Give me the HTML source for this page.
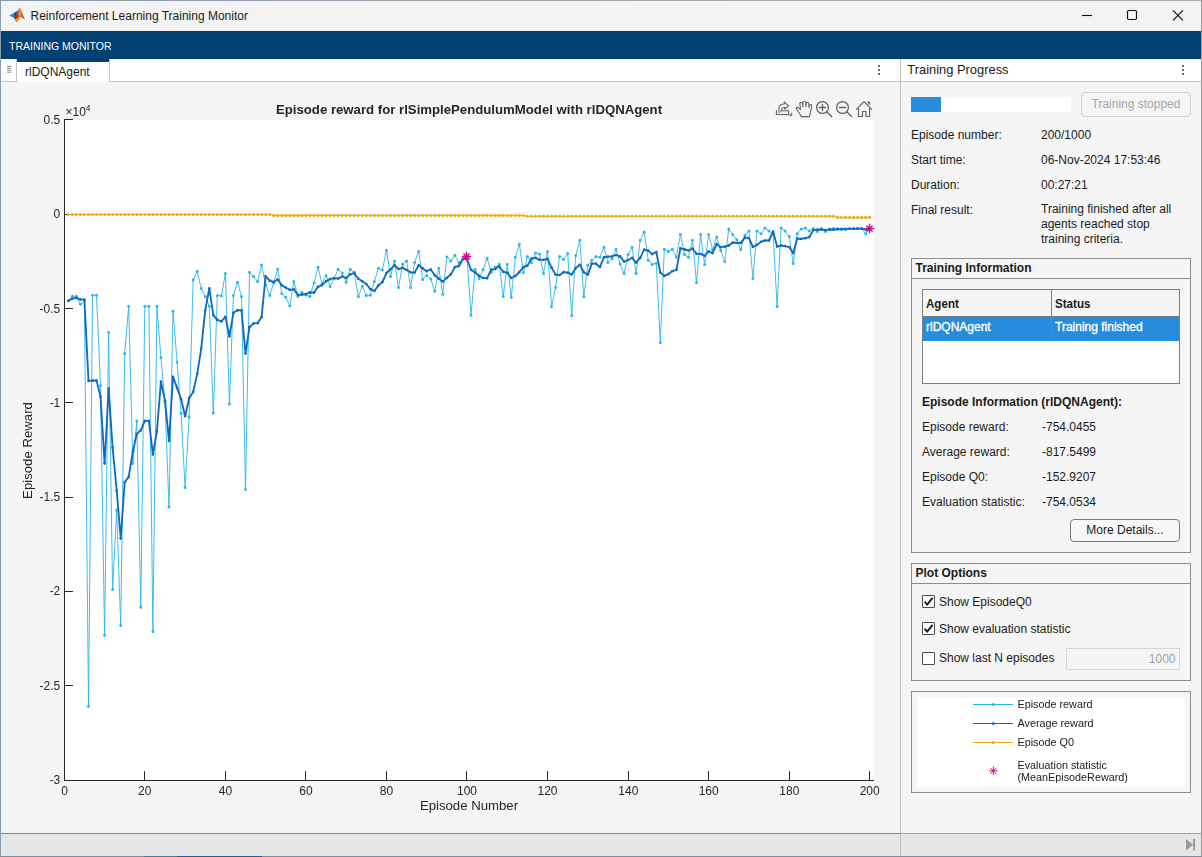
<!DOCTYPE html>
<html><head><meta charset="utf-8"><title>Reinforcement Learning Training Monitor</title>
<style>
html,body{margin:0;padding:0;}
body{width:1202px;height:857px;position:relative;overflow:hidden;background:#f5f5f5;font-family:"Liberation Sans",sans-serif;font-size:12px;color:#1a1a1a;}
.abs{position:absolute;}
#root{position:absolute;left:0;top:0;width:1202px;height:857px;}
.gs{will-change:transform;}
.t{position:absolute;white-space:nowrap;line-height:14px;}
.b{font-weight:bold;}
#titlebar{left:0;top:0;width:1202px;height:31px;background:#f3f3f3;}
#ribbon{left:0;top:31px;width:1202px;height:28px;background:#004073;}
#tabstrip{left:1px;top:59px;width:899px;height:22px;background:#fff;border-bottom:1px solid #c4c4c4;}
#rhead{left:901px;top:59px;width:300px;height:22px;background:#fff;border-bottom:1px solid #c4c4c4;}
#vdiv{left:900px;top:59px;width:1px;height:775px;background:#bdbdbd;}
#status{left:0;top:833px;width:1202px;height:23px;background:#e6e6e6;border-top:1px solid #a2a2a2;box-sizing:border-box;}
.panel{position:absolute;border:1px solid #8c8c8c;box-sizing:border-box;}
.ptitle{position:absolute;left:0;top:0;right:0;height:19px;border-bottom:1px solid #8c8c8c;}
.cb{position:absolute;width:13px;height:13px;box-sizing:border-box;border:1px solid #4a4a4a;background:#fff;border-radius:1px;}
</style></head><body><div id="root">

<!-- window chrome -->
<div class="abs" id="titlebar"></div>
<svg class="abs" style="left:8px;top:7px" width="18" height="17" viewBox="0 0 18 17">
  <defs>
    <linearGradient id="mlg" x1="6" y1="0" x2="17" y2="0" gradientUnits="userSpaceOnUse">
      <stop offset="0" stop-color="#7a1710"/><stop offset="0.3" stop-color="#b8321a"/><stop offset="0.5" stop-color="#f0902f"/><stop offset="0.62" stop-color="#ee8a2c"/><stop offset="0.72" stop-color="#cf471e"/><stop offset="1" stop-color="#a62a17"/>
    </linearGradient>
    <linearGradient id="mlb" x1="1" y1="0" x2="11" y2="0" gradientUnits="userSpaceOnUse">
      <stop offset="0" stop-color="#4a9be3"/><stop offset="0.5" stop-color="#2f7fd0"/><stop offset="0.62" stop-color="#17365f"/><stop offset="0.8" stop-color="#2f7fd0"/><stop offset="1" stop-color="#3a8ad6"/>
    </linearGradient>
  </defs>
  <path d="M1 8.5L6.2 5.8L9 4.1L11.2 1.5L9.6 7.5L6.2 11.1Z" fill="url(#mlb)"/>
  <path d="M6.2 11.1C8.2 9 10 4.5 11.3 1.3Q11.85 0.4 12.5 1.3C13.8 4.5 15 9.5 16.9 12.2C15.5 11.6 14 10.6 12.7 10.3C11.2 11.8 9.8 13.8 8.2 15C7.6 13.4 7 12.2 6.2 11.1Z" fill="url(#mlg)"/>
  <path d="M6.9 12.2L8.2 15C9.8 13.8 11 12.2 12.3 10.7L10.2 10.4Z" fill="#f6a21f" opacity="0.85"/>
</svg>
<div class="t" style="left:30.5px;top:9px;font-size:12px;color:#1b1b1b;">Reinforcement Learning Training Monitor</div>
<svg class="abs" style="left:1070px;top:0" width="132" height="31" viewBox="0 0 132 31">
  <path d="M12 15.5H22" stroke="#111" stroke-width="1.1"/>
  <rect x="57.5" y="10.5" width="9" height="9" rx="1.2" fill="none" stroke="#111" stroke-width="1.15"/>
  <path d="M103 10.3L113 20.3M113 10.3L103 20.3" stroke="#111" stroke-width="1.15"/>
</svg>
<div class="abs" id="ribbon"></div>
<div class="t" style="left:9px;top:38.5px;font-size:10.5px;color:#fff;">TRAINING MONITOR</div>

<!-- tab strip -->
<div class="abs" id="tabstrip"></div>
<div class="abs" style="left:16px;top:59px;width:1px;height:22px;background:#c4c4c4"></div>
<div class="abs" style="left:17px;top:59px;width:92px;height:23px;background:#fff;"></div>
<div class="abs" style="left:17px;top:59px;width:92px;height:3px;background:#004073;"></div>
<div class="abs" style="left:109px;top:59px;width:1px;height:22px;background:#c4c4c4"></div>
<svg class="abs" style="left:6px;top:65px" width="7" height="9" viewBox="0 0 7 9"><path d="M1 1.5H5.3M1 3.4H5.3M1 5.3H5.3M1 7.2H5.3" stroke="#8a8a8a" stroke-width="1"/></svg>
<div class="t" style="left:25px;top:64.5px;font-size:12px;color:#1a1a1a;">rlDQNAgent</div>
<svg class="abs" style="left:878px;top:65px" width="2" height="10" viewBox="0 0 2 10"><rect x="0" y="0" width="2" height="2" fill="#686868"/><rect x="0" y="4" width="2" height="2" fill="#686868"/><rect x="0" y="8" width="2" height="2" fill="#686868"/></svg>

<!-- right header -->
<div class="abs" id="rhead"></div>
<div class="t" style="left:907.3px;top:63px;font-size:12.9px;color:#1a1a1a;">Training Progress</div>
<svg class="abs" style="left:1182px;top:65px" width="2" height="10" viewBox="0 0 2 10"><rect x="0" y="0" width="2" height="2" fill="#686868"/><rect x="0" y="4" width="2" height="2" fill="#686868"/><rect x="0" y="8" width="2" height="2" fill="#686868"/></svg>
<div class="abs" id="vdiv"></div>

<!-- plot -->
<svg class="abs gs" style="left:0;top:82px" width="900" height="751" viewBox="0 82 900 751" font-family="Liberation Sans, sans-serif">
  <rect x="65" y="120" width="809" height="661" fill="#fff"/>
  <g stroke="#262626" stroke-width="1" fill="none">
    <path d="M64.5 119V781M64 780.5H874"/>
    <path d="M64.5 119.5H73M64.5 214.5H73M64.5 308.5H73M64.5 402.5H73M64.5 497.5H73M64.5 591.5H73M64.5 685.5H73"/>
    <path d="M144.5 780V771.2M225.5 780V771.2M305.5 780V771.2M386.5 780V771.2M466.5 780V771.2M547.5 780V771.2M628.5 780V771.2M708.5 780V771.2M789.5 780V771.2M869.5 780V771.2"/>
  </g>
  <g font-size="12" fill="#262626" text-anchor="end">
    <text x="60.3" y="123.8">0.5</text>
    <text x="60.3" y="217.8">0</text>
    <text x="60.3" y="312.8">-0.5</text>
    <text x="60.3" y="407">-1</text>
    <text x="60.3" y="500.8">-1.5</text>
    <text x="60.3" y="594.8">-2</text>
    <text x="60.3" y="689.8">-2.5</text>
    <text x="60.3" y="784">-3</text>
  </g>
  <g font-size="12" fill="#262626" text-anchor="middle">
    <text x="64.5" y="795">0</text>
    <text x="144.8" y="795">20</text>
    <text x="225.5" y="795">40</text>
    <text x="306" y="795">60</text>
    <text x="386.5" y="795">80</text>
    <text x="467" y="795">100</text>
    <text x="547.5" y="795">120</text>
    <text x="628.3" y="795">140</text>
    <text x="708.7" y="795">160</text>
    <text x="789.3" y="795">180</text>
    <text x="869.7" y="795">200</text>
  </g>
  <text x="65.5" y="116" font-size="12" fill="#262626">×10<tspan font-size="8.5" dy="-5">4</tspan></text>
  <text x="469" y="113.5" font-size="13.2" font-weight="bold" fill="#262626" text-anchor="middle">Episode reward for rlSimplePendulumModel with rlDQNAgent</text>
  <text x="469" y="810" font-size="13.2" fill="#262626" text-anchor="middle">Episode Number</text>
  <text transform="translate(32.3,450.5) rotate(-90)" font-size="13.2" fill="#262626" text-anchor="middle">Episode Reward</text>
  <polyline points="68.3,300.8 72.4,296.3 76.4,296.3 80.4,304.3 84.4,300.8 88.5,706.3 92.5,295.2 96.5,295.2 100.5,385.5 104.6,635.3 108.6,332.5 112.6,589.4 116.7,510.0 120.7,625.5 124.7,353.5 128.7,306.3 132.8,463.4 136.8,421.0 140.8,607.3 144.8,306.3 148.9,306.3 152.9,631.4 156.9,306.3 160.9,357.5 165.0,402.0 169.0,507.0 173.0,311.2 177.1,362.0 181.1,413.5 185.1,487.4 189.1,417.0 193.2,279.7 197.2,271.3 201.2,288.4 205.2,296.4 209.3,306.3 213.3,413.0 217.3,295.4 221.4,295.8 225.4,273.5 229.4,404.0 233.4,295.4 237.5,282.2 241.5,296.4 245.5,489.5 249.5,272.3 253.6,276.6 257.6,281.4 261.6,265.0 265.6,285.0 269.7,295.4 273.7,283.0 277.7,269.3 281.8,293.5 285.8,297.3 289.8,305.7 293.8,281.4 297.9,296.6 301.9,292.3 305.9,295.0 309.9,296.6 314.0,283.0 318.0,267.3 322.0,283.7 326.1,275.4 330.1,286.4 334.1,278.4 338.1,269.3 342.2,273.0 346.2,282.2 350.2,269.3 354.2,272.3 358.3,296.6 362.3,286.3 366.3,295.4 370.4,295.2 374.4,281.4 378.4,268.3 382.4,270.0 386.5,250.3 390.5,276.4 394.5,261.0 398.5,287.5 402.6,264.3 406.6,261.0 410.6,287.5 414.6,262.5 418.7,251.4 422.7,279.4 426.7,275.4 430.8,279.0 434.8,291.3 438.8,268.2 442.8,294.3 446.9,256.9 450.9,261.0 454.9,255.2 458.9,262.5 463.0,259.0 467.0,257.2 471.0,315.2 475.1,269.3 479.1,278.4 483.1,269.7 487.1,258.2 491.2,272.3 495.2,267.0 499.2,264.3 503.2,296.6 507.3,264.3 511.3,297.6 515.3,257.2 519.4,244.3 523.4,272.6 527.4,256.4 531.4,262.5 535.5,253.0 539.5,254.1 543.5,273.5 547.5,251.4 551.6,306.4 555.6,287.5 559.6,256.4 563.6,259.4 567.7,253.4 571.7,315.5 575.7,255.6 579.8,240.2 583.8,296.6 587.8,265.2 591.8,260.2 595.9,256.4 599.9,257.2 603.9,247.3 607.9,262.5 612.0,258.7 616.0,249.3 620.0,264.0 624.1,273.4 628.1,254.6 632.1,247.6 636.1,273.4 640.2,240.2 644.2,232.1 648.2,260.2 652.2,264.4 656.3,263.2 660.3,342.4 664.3,249.3 668.4,251.4 672.4,249.3 676.4,257.2 680.4,234.4 684.5,254.6 688.5,257.2 692.5,240.2 696.5,282.5 700.6,234.6 704.6,264.5 708.6,234.5 712.6,249.6 716.7,237.0 720.7,250.4 724.7,261.4 728.8,229.1 732.8,234.5 736.8,239.8 740.8,249.6 744.9,234.9 748.9,231.1 752.9,278.4 756.9,231.1 761.0,233.7 765.0,228.1 769.0,231.1 773.1,233.7 777.1,306.4 781.1,228.1 785.1,231.1 789.2,236.4 793.2,263.6 797.2,233.7 801.2,229.1 805.3,228.1 809.3,231.1 813.3,228.4 817.3,231.4 821.4,228.4 825.4,231.4 829.4,229.1 833.5,228.4 837.5,228.8 841.5,228.8 845.5,229.4 849.6,228.4 853.6,228.4 857.6,228.4 861.6,228.6 865.7,233.7 869.7,228.3" fill="none" stroke="#29B6EC" stroke-width="0.9" stroke-linejoin="round"/>
<path d="M68.3 300.8h0M72.4 296.3h0M76.4 296.3h0M80.4 304.3h0M84.4 300.8h0M88.5 706.3h0M92.5 295.2h0M96.5 295.2h0M100.5 385.5h0M104.6 635.3h0M108.6 332.5h0M112.6 589.4h0M116.7 510.0h0M120.7 625.5h0M124.7 353.5h0M128.7 306.3h0M132.8 463.4h0M136.8 421.0h0M140.8 607.3h0M144.8 306.3h0M148.9 306.3h0M152.9 631.4h0M156.9 306.3h0M160.9 357.5h0M165.0 402.0h0M169.0 507.0h0M173.0 311.2h0M177.1 362.0h0M181.1 413.5h0M185.1 487.4h0M189.1 417.0h0M193.2 279.7h0M197.2 271.3h0M201.2 288.4h0M205.2 296.4h0M209.3 306.3h0M213.3 413.0h0M217.3 295.4h0M221.4 295.8h0M225.4 273.5h0M229.4 404.0h0M233.4 295.4h0M237.5 282.2h0M241.5 296.4h0M245.5 489.5h0M249.5 272.3h0M253.6 276.6h0M257.6 281.4h0M261.6 265.0h0M265.6 285.0h0M269.7 295.4h0M273.7 283.0h0M277.7 269.3h0M281.8 293.5h0M285.8 297.3h0M289.8 305.7h0M293.8 281.4h0M297.9 296.6h0M301.9 292.3h0M305.9 295.0h0M309.9 296.6h0M314.0 283.0h0M318.0 267.3h0M322.0 283.7h0M326.1 275.4h0M330.1 286.4h0M334.1 278.4h0M338.1 269.3h0M342.2 273.0h0M346.2 282.2h0M350.2 269.3h0M354.2 272.3h0M358.3 296.6h0M362.3 286.3h0M366.3 295.4h0M370.4 295.2h0M374.4 281.4h0M378.4 268.3h0M382.4 270.0h0M386.5 250.3h0M390.5 276.4h0M394.5 261.0h0M398.5 287.5h0M402.6 264.3h0M406.6 261.0h0M410.6 287.5h0M414.6 262.5h0M418.7 251.4h0M422.7 279.4h0M426.7 275.4h0M430.8 279.0h0M434.8 291.3h0M438.8 268.2h0M442.8 294.3h0M446.9 256.9h0M450.9 261.0h0M454.9 255.2h0M458.9 262.5h0M463.0 259.0h0M467.0 257.2h0M471.0 315.2h0M475.1 269.3h0M479.1 278.4h0M483.1 269.7h0M487.1 258.2h0M491.2 272.3h0M495.2 267.0h0M499.2 264.3h0M503.2 296.6h0M507.3 264.3h0M511.3 297.6h0M515.3 257.2h0M519.4 244.3h0M523.4 272.6h0M527.4 256.4h0M531.4 262.5h0M535.5 253.0h0M539.5 254.1h0M543.5 273.5h0M547.5 251.4h0M551.6 306.4h0M555.6 287.5h0M559.6 256.4h0M563.6 259.4h0M567.7 253.4h0M571.7 315.5h0M575.7 255.6h0M579.8 240.2h0M583.8 296.6h0M587.8 265.2h0M591.8 260.2h0M595.9 256.4h0M599.9 257.2h0M603.9 247.3h0M607.9 262.5h0M612.0 258.7h0M616.0 249.3h0M620.0 264.0h0M624.1 273.4h0M628.1 254.6h0M632.1 247.6h0M636.1 273.4h0M640.2 240.2h0M644.2 232.1h0M648.2 260.2h0M652.2 264.4h0M656.3 263.2h0M660.3 342.4h0M664.3 249.3h0M668.4 251.4h0M672.4 249.3h0M676.4 257.2h0M680.4 234.4h0M684.5 254.6h0M688.5 257.2h0M692.5 240.2h0M696.5 282.5h0M700.6 234.6h0M704.6 264.5h0M708.6 234.5h0M712.6 249.6h0M716.7 237.0h0M720.7 250.4h0M724.7 261.4h0M728.8 229.1h0M732.8 234.5h0M736.8 239.8h0M740.8 249.6h0M744.9 234.9h0M748.9 231.1h0M752.9 278.4h0M756.9 231.1h0M761.0 233.7h0M765.0 228.1h0M769.0 231.1h0M773.1 233.7h0M777.1 306.4h0M781.1 228.1h0M785.1 231.1h0M789.2 236.4h0M793.2 263.6h0M797.2 233.7h0M801.2 229.1h0M805.3 228.1h0M809.3 231.1h0M813.3 228.4h0M817.3 231.4h0M821.4 228.4h0M825.4 231.4h0M829.4 229.1h0M833.5 228.4h0M837.5 228.8h0M841.5 228.8h0M845.5 229.4h0M849.6 228.4h0M853.6 228.4h0M857.6 228.4h0M861.6 228.6h0M865.7 233.7h0M869.7 228.3h0" stroke="#29B6EC" stroke-width="3.0" stroke-linecap="round" fill="none"/>
<polyline points="68.3,214.5 72.4,214.5 76.4,214.5 80.4,214.5 84.4,214.5 88.5,214.5 92.5,214.5 96.5,214.5 100.5,214.5 104.6,214.5 108.6,214.5 112.6,214.5 116.7,214.5 120.7,214.5 124.7,214.5 128.7,214.5 132.8,214.5 136.8,214.5 140.8,214.5 144.8,214.5 148.9,214.5 152.9,214.5 156.9,214.5 160.9,214.5 165.0,214.5 169.0,214.5 173.0,214.5 177.1,214.5 181.1,214.5 185.1,214.5 189.1,214.5 193.2,214.5 197.2,214.5 201.2,214.5 205.2,214.5 209.3,214.5 213.3,214.5 217.3,214.5 221.4,214.5 225.4,214.5 229.4,214.5 233.4,214.5 237.5,214.5 241.5,214.5 245.5,214.5 249.5,214.5 253.6,214.5 257.6,214.5 261.6,214.5 265.6,214.5 269.7,214.5 273.7,215.4 277.7,215.4 281.8,215.4 285.8,215.4 289.8,215.4 293.8,215.4 297.9,215.4 301.9,215.4 305.9,215.4 309.9,215.4 314.0,215.4 318.0,215.4 322.0,215.4 326.1,215.4 330.1,215.4 334.1,215.4 338.1,215.4 342.2,215.4 346.2,215.4 350.2,215.4 354.2,215.4 358.3,215.4 362.3,215.4 366.3,215.4 370.4,215.4 374.4,215.4 378.4,215.4 382.4,215.4 386.5,215.4 390.5,215.4 394.5,215.4 398.5,215.4 402.6,215.4 406.6,215.4 410.6,215.4 414.6,215.4 418.7,215.4 422.7,215.4 426.7,215.4 430.8,215.4 434.8,215.4 438.8,215.4 442.8,215.4 446.9,215.4 450.9,215.4 454.9,215.4 458.9,215.4 463.0,215.4 467.0,215.4 471.0,215.4 475.1,215.4 479.1,215.4 483.1,215.4 487.1,215.4 491.2,215.4 495.2,215.4 499.2,215.4 503.2,215.4 507.3,215.4 511.3,215.4 515.3,215.4 519.4,215.4 523.4,215.4 527.4,216.3 531.4,216.3 535.5,216.3 539.5,216.3 543.5,216.3 547.5,216.3 551.6,216.3 555.6,216.3 559.6,216.3 563.6,216.3 567.7,216.3 571.7,216.3 575.7,216.3 579.8,216.3 583.8,216.3 587.8,216.3 591.8,216.3 595.9,216.3 599.9,216.3 603.9,216.3 607.9,216.3 612.0,216.3 616.0,216.3 620.0,216.3 624.1,216.3 628.1,216.3 632.1,216.3 636.1,216.3 640.2,216.3 644.2,216.3 648.2,216.3 652.2,216.3 656.3,216.3 660.3,216.3 664.3,216.3 668.4,216.3 672.4,216.3 676.4,216.3 680.4,216.3 684.5,216.3 688.5,216.3 692.5,216.3 696.5,216.3 700.6,216.3 704.6,216.3 708.6,216.3 712.6,216.3 716.7,216.3 720.7,216.3 724.7,216.3 728.8,216.3 732.8,216.3 736.8,216.3 740.8,216.3 744.9,216.3 748.9,216.3 752.9,216.3 756.9,216.3 761.0,216.3 765.0,216.3 769.0,216.3 773.1,216.3 777.1,216.3 781.1,216.3 785.1,216.3 789.2,216.3 793.2,216.3 797.2,216.3 801.2,216.3 805.3,216.3 809.3,216.3 813.3,216.3 817.3,216.3 821.4,216.3 825.4,216.3 829.4,216.3 833.5,216.3 837.5,217.4 841.5,217.4 845.5,217.4 849.6,217.4 853.6,217.4 857.6,217.4 861.6,217.4 865.7,217.4 869.7,217.4" fill="none" stroke="#ECAA14" stroke-width="1"/>
<path d="M68.3 214.5h0M72.4 214.5h0M76.4 214.5h0M80.4 214.5h0M84.4 214.5h0M88.5 214.5h0M92.5 214.5h0M96.5 214.5h0M100.5 214.5h0M104.6 214.5h0M108.6 214.5h0M112.6 214.5h0M116.7 214.5h0M120.7 214.5h0M124.7 214.5h0M128.7 214.5h0M132.8 214.5h0M136.8 214.5h0M140.8 214.5h0M144.8 214.5h0M148.9 214.5h0M152.9 214.5h0M156.9 214.5h0M160.9 214.5h0M165.0 214.5h0M169.0 214.5h0M173.0 214.5h0M177.1 214.5h0M181.1 214.5h0M185.1 214.5h0M189.1 214.5h0M193.2 214.5h0M197.2 214.5h0M201.2 214.5h0M205.2 214.5h0M209.3 214.5h0M213.3 214.5h0M217.3 214.5h0M221.4 214.5h0M225.4 214.5h0M229.4 214.5h0M233.4 214.5h0M237.5 214.5h0M241.5 214.5h0M245.5 214.5h0M249.5 214.5h0M253.6 214.5h0M257.6 214.5h0M261.6 214.5h0M265.6 214.5h0M269.7 214.5h0M273.7 215.4h0M277.7 215.4h0M281.8 215.4h0M285.8 215.4h0M289.8 215.4h0M293.8 215.4h0M297.9 215.4h0M301.9 215.4h0M305.9 215.4h0M309.9 215.4h0M314.0 215.4h0M318.0 215.4h0M322.0 215.4h0M326.1 215.4h0M330.1 215.4h0M334.1 215.4h0M338.1 215.4h0M342.2 215.4h0M346.2 215.4h0M350.2 215.4h0M354.2 215.4h0M358.3 215.4h0M362.3 215.4h0M366.3 215.4h0M370.4 215.4h0M374.4 215.4h0M378.4 215.4h0M382.4 215.4h0M386.5 215.4h0M390.5 215.4h0M394.5 215.4h0M398.5 215.4h0M402.6 215.4h0M406.6 215.4h0M410.6 215.4h0M414.6 215.4h0M418.7 215.4h0M422.7 215.4h0M426.7 215.4h0M430.8 215.4h0M434.8 215.4h0M438.8 215.4h0M442.8 215.4h0M446.9 215.4h0M450.9 215.4h0M454.9 215.4h0M458.9 215.4h0M463.0 215.4h0M467.0 215.4h0M471.0 215.4h0M475.1 215.4h0M479.1 215.4h0M483.1 215.4h0M487.1 215.4h0M491.2 215.4h0M495.2 215.4h0M499.2 215.4h0M503.2 215.4h0M507.3 215.4h0M511.3 215.4h0M515.3 215.4h0M519.4 215.4h0M523.4 215.4h0M527.4 216.3h0M531.4 216.3h0M535.5 216.3h0M539.5 216.3h0M543.5 216.3h0M547.5 216.3h0M551.6 216.3h0M555.6 216.3h0M559.6 216.3h0M563.6 216.3h0M567.7 216.3h0M571.7 216.3h0M575.7 216.3h0M579.8 216.3h0M583.8 216.3h0M587.8 216.3h0M591.8 216.3h0M595.9 216.3h0M599.9 216.3h0M603.9 216.3h0M607.9 216.3h0M612.0 216.3h0M616.0 216.3h0M620.0 216.3h0M624.1 216.3h0M628.1 216.3h0M632.1 216.3h0M636.1 216.3h0M640.2 216.3h0M644.2 216.3h0M648.2 216.3h0M652.2 216.3h0M656.3 216.3h0M660.3 216.3h0M664.3 216.3h0M668.4 216.3h0M672.4 216.3h0M676.4 216.3h0M680.4 216.3h0M684.5 216.3h0M688.5 216.3h0M692.5 216.3h0M696.5 216.3h0M700.6 216.3h0M704.6 216.3h0M708.6 216.3h0M712.6 216.3h0M716.7 216.3h0M720.7 216.3h0M724.7 216.3h0M728.8 216.3h0M732.8 216.3h0M736.8 216.3h0M740.8 216.3h0M744.9 216.3h0M748.9 216.3h0M752.9 216.3h0M756.9 216.3h0M761.0 216.3h0M765.0 216.3h0M769.0 216.3h0M773.1 216.3h0M777.1 216.3h0M781.1 216.3h0M785.1 216.3h0M789.2 216.3h0M793.2 216.3h0M797.2 216.3h0M801.2 216.3h0M805.3 216.3h0M809.3 216.3h0M813.3 216.3h0M817.3 216.3h0M821.4 216.3h0M825.4 216.3h0M829.4 216.3h0M833.5 216.3h0M837.5 217.4h0M841.5 217.4h0M845.5 217.4h0M849.6 217.4h0M853.6 217.4h0M857.6 217.4h0M861.6 217.4h0M865.7 217.4h0M869.7 217.4h0" stroke="#ECAA14" stroke-width="3.1" stroke-linecap="round" fill="none"/>
<polyline points="68.3,300.8 72.4,298.6 76.4,297.8 80.4,299.4 84.4,299.7 88.5,380.8 92.5,380.6 96.5,380.4 100.5,396.6 104.6,463.5 108.6,388.7 112.6,447.6 116.7,490.5 120.7,538.5 124.7,482.2 128.7,476.9 132.8,451.7 136.8,433.9 140.8,430.3 144.8,420.9 148.9,420.9 152.9,454.5 156.9,431.5 160.9,381.6 165.0,400.7 169.0,440.8 173.0,376.8 177.1,387.9 181.1,399.1 185.1,416.2 189.1,398.2 193.2,391.9 197.2,373.8 201.2,348.8 205.2,310.6 209.3,288.4 213.3,315.1 217.3,319.9 221.4,321.4 225.4,316.8 229.4,336.3 233.4,312.8 237.5,310.2 241.5,310.3 245.5,353.5 249.5,327.2 253.6,323.4 257.6,323.2 261.6,317.0 265.6,276.1 269.7,280.7 273.7,282.0 277.7,279.5 281.8,285.2 285.8,287.7 289.8,289.8 293.8,289.4 297.9,294.9 301.9,294.7 305.9,294.2 309.9,292.4 314.0,292.7 318.0,286.8 322.0,285.1 326.1,281.2 330.1,279.2 334.1,278.2 338.1,278.6 342.2,276.5 346.2,277.9 350.2,274.4 354.2,273.2 358.3,278.7 362.3,281.3 366.3,284.0 370.4,289.2 374.4,291.0 378.4,285.3 382.4,282.1 386.5,273.0 390.5,269.3 394.5,265.2 398.5,269.0 402.6,267.9 406.6,270.0 410.6,272.3 414.6,272.6 418.7,265.3 422.7,268.4 426.7,271.2 430.8,269.5 434.8,275.3 438.8,278.7 442.8,281.6 446.9,277.9 450.9,274.3 454.9,267.1 458.9,266.0 463.0,258.9 467.0,259.0 471.0,269.8 475.1,272.6 479.1,275.8 483.1,278.0 487.1,278.2 491.2,269.6 495.2,269.1 499.2,266.3 503.2,271.7 507.3,272.9 511.3,278.0 515.3,276.0 519.4,272.0 523.4,267.2 527.4,265.6 531.4,258.6 535.5,257.8 539.5,259.7 543.5,259.9 547.5,258.9 551.6,267.7 555.6,274.6 559.6,275.0 563.6,272.2 567.7,272.6 571.7,274.4 575.7,268.1 579.8,264.8 583.8,272.3 587.8,274.6 591.8,263.6 595.9,263.7 599.9,267.1 603.9,257.3 607.9,256.7 612.0,256.4 616.0,255.0 620.0,256.4 624.1,261.6 628.1,260.0 632.1,257.8 636.1,262.6 640.2,257.8 644.2,249.6 648.2,250.7 652.2,254.1 656.3,252.0 660.3,272.5 664.3,275.9 668.4,274.1 672.4,271.1 676.4,269.9 680.4,248.3 684.5,249.4 688.5,250.5 692.5,248.7 696.5,253.8 700.6,253.8 704.6,255.8 708.6,251.3 712.6,253.1 716.7,244.0 720.7,247.2 724.7,246.6 728.8,245.5 732.8,242.5 736.8,243.0 740.8,242.9 744.9,237.6 748.9,238.0 752.9,246.8 756.9,245.0 761.0,241.8 765.0,240.5 769.0,240.5 773.1,231.5 777.1,246.6 781.1,245.5 785.1,246.1 789.2,247.1 793.2,253.1 797.2,238.6 801.2,238.8 805.3,238.2 809.3,237.1 813.3,230.1 817.3,229.6 821.4,229.5 825.4,230.1 829.4,229.7 833.5,229.7 837.5,229.2 841.5,229.3 845.5,228.9 849.6,228.8 853.6,228.8 857.6,228.7 861.6,228.6 865.7,229.5 869.7,229.5" fill="none" stroke="#0F6BC2" stroke-width="1.85" stroke-linejoin="round"/>
<path d="M68.3 300.8h0M72.4 298.6h0M76.4 297.8h0M80.4 299.4h0M84.4 299.7h0M88.5 380.8h0M92.5 380.6h0M96.5 380.4h0M100.5 396.6h0M104.6 463.5h0M108.6 388.7h0M112.6 447.6h0M116.7 490.5h0M120.7 538.5h0M124.7 482.2h0M128.7 476.9h0M132.8 451.7h0M136.8 433.9h0M140.8 430.3h0M144.8 420.9h0M148.9 420.9h0M152.9 454.5h0M156.9 431.5h0M160.9 381.6h0M165.0 400.7h0M169.0 440.8h0M173.0 376.8h0M177.1 387.9h0M181.1 399.1h0M185.1 416.2h0M189.1 398.2h0M193.2 391.9h0M197.2 373.8h0M201.2 348.8h0M205.2 310.6h0M209.3 288.4h0M213.3 315.1h0M217.3 319.9h0M221.4 321.4h0M225.4 316.8h0M229.4 336.3h0M233.4 312.8h0M237.5 310.2h0M241.5 310.3h0M245.5 353.5h0M249.5 327.2h0M253.6 323.4h0M257.6 323.2h0M261.6 317.0h0M265.6 276.1h0M269.7 280.7h0M273.7 282.0h0M277.7 279.5h0M281.8 285.2h0M285.8 287.7h0M289.8 289.8h0M293.8 289.4h0M297.9 294.9h0M301.9 294.7h0M305.9 294.2h0M309.9 292.4h0M314.0 292.7h0M318.0 286.8h0M322.0 285.1h0M326.1 281.2h0M330.1 279.2h0M334.1 278.2h0M338.1 278.6h0M342.2 276.5h0M346.2 277.9h0M350.2 274.4h0M354.2 273.2h0M358.3 278.7h0M362.3 281.3h0M366.3 284.0h0M370.4 289.2h0M374.4 291.0h0M378.4 285.3h0M382.4 282.1h0M386.5 273.0h0M390.5 269.3h0M394.5 265.2h0M398.5 269.0h0M402.6 267.9h0M406.6 270.0h0M410.6 272.3h0M414.6 272.6h0M418.7 265.3h0M422.7 268.4h0M426.7 271.2h0M430.8 269.5h0M434.8 275.3h0M438.8 278.7h0M442.8 281.6h0M446.9 277.9h0M450.9 274.3h0M454.9 267.1h0M458.9 266.0h0M463.0 258.9h0M467.0 259.0h0M471.0 269.8h0M475.1 272.6h0M479.1 275.8h0M483.1 278.0h0M487.1 278.2h0M491.2 269.6h0M495.2 269.1h0M499.2 266.3h0M503.2 271.7h0M507.3 272.9h0M511.3 278.0h0M515.3 276.0h0M519.4 272.0h0M523.4 267.2h0M527.4 265.6h0M531.4 258.6h0M535.5 257.8h0M539.5 259.7h0M543.5 259.9h0M547.5 258.9h0M551.6 267.7h0M555.6 274.6h0M559.6 275.0h0M563.6 272.2h0M567.7 272.6h0M571.7 274.4h0M575.7 268.1h0M579.8 264.8h0M583.8 272.3h0M587.8 274.6h0M591.8 263.6h0M595.9 263.7h0M599.9 267.1h0M603.9 257.3h0M607.9 256.7h0M612.0 256.4h0M616.0 255.0h0M620.0 256.4h0M624.1 261.6h0M628.1 260.0h0M632.1 257.8h0M636.1 262.6h0M640.2 257.8h0M644.2 249.6h0M648.2 250.7h0M652.2 254.1h0M656.3 252.0h0M660.3 272.5h0M664.3 275.9h0M668.4 274.1h0M672.4 271.1h0M676.4 269.9h0M680.4 248.3h0M684.5 249.4h0M688.5 250.5h0M692.5 248.7h0M696.5 253.8h0M700.6 253.8h0M704.6 255.8h0M708.6 251.3h0M712.6 253.1h0M716.7 244.0h0M720.7 247.2h0M724.7 246.6h0M728.8 245.5h0M732.8 242.5h0M736.8 243.0h0M740.8 242.9h0M744.9 237.6h0M748.9 238.0h0M752.9 246.8h0M756.9 245.0h0M761.0 241.8h0M765.0 240.5h0M769.0 240.5h0M773.1 231.5h0M777.1 246.6h0M781.1 245.5h0M785.1 246.1h0M789.2 247.1h0M793.2 253.1h0M797.2 238.6h0M801.2 238.8h0M805.3 238.2h0M809.3 237.1h0M813.3 230.1h0M817.3 229.6h0M821.4 229.5h0M825.4 230.1h0M829.4 229.7h0M833.5 229.7h0M837.5 229.2h0M841.5 229.3h0M845.5 228.9h0M849.6 228.8h0M853.6 228.8h0M857.6 228.7h0M861.6 228.6h0M865.7 229.5h0M869.7 229.5h0" stroke="#0F6BC2" stroke-width="2.7" stroke-linecap="round" fill="none"/>
<path d="M461.80 256.50L471.20 256.50M463.44 253.44L469.56 259.56M466.50 251.80L466.50 261.20M469.56 253.44L463.44 259.56" stroke="#CC0A8C" stroke-width="1.35" fill="none"/>
<path d="M864.80 228.50L874.20 228.50M866.44 225.44L872.56 231.56M869.50 223.80L869.50 233.20M872.56 225.44L866.44 231.56" stroke="#CC0A8C" stroke-width="1.35" fill="none"/>
  <!-- axes toolbar -->
  <g stroke="#626262" stroke-width="1.05" fill="none" stroke-linecap="round" stroke-linejoin="round">
    <path d="M776.4 110.6V114.4H788.6V110.8H781.6"/>
    <path d="M778.9 112.4V108.8C779 105.6 781.2 103.9 784.2 103.9V102L788.6 105.8L784.6 109V107.2C782.5 107.3 781.2 108.6 780.9 112"/>
    <path d="M789.2 115.7H791.8V112.9Z" fill="#626262" stroke-width="0.4"/>
    <path d="M801.6 116.6L798.2 111.5L796.4 108.6Q795.9 107.4 797 107.3Q798.2 107.3 800.6 109.5L799.8 103.6Q799.7 102.3 800.9 102.2Q802 102.1 802.3 103.4L802.9 107L802.9 102.6Q803 101.2 804.3 101.2Q805.6 101.2 805.7 102.6L806 107L806.3 103.4Q806.5 102.2 807.6 102.2Q808.8 102.3 808.8 103.6L808.9 107.2L809.6 105.4Q810 104.3 811 104.5Q811.9 104.8 811.7 106L809.5 116.6Z"/>
    <g stroke-width="1.3"><circle cx="822.5" cy="107.5" r="5.9"/><path d="M826.7 111.8L831.6 116.5M819.4 107.5H825.6M822.5 104.4V110.6"/>
    <circle cx="842.5" cy="107.5" r="5.9"/><path d="M846.7 111.8L851.6 116.5M839.4 107.5H845.6"/></g>
    <path d="M856.5 109.3L864 101.6L871.6 109.3M858.5 108.6V116.5H862.5V111.5H866V116.5H869.6V108.6" stroke-width="1.15"/>
    <path d="M867.4 102H870V104.6Z" fill="#626262" stroke-width="0.5"/>
  </g>
</svg>

<!-- right panel contents -->
<div class="abs" style="left:911px;top:97px;width:160px;height:15px;background:#fff;"></div>
<div class="abs" style="left:911px;top:97px;width:30px;height:15px;background:#268cdd;"></div>
<div class="abs" style="left:1081px;top:92px;width:110px;height:25px;box-sizing:border-box;border:1px solid #d2d2d2;border-radius:4px;background:#f5f5f5;"></div>
<div class="t" style="left:1081px;top:97px;width:110px;text-align:center;color:#a6a6a6;">Training stopped</div>

<div class="t" style="left:911px;top:128px;">Episode number:</div>
<div class="t" style="left:1041px;top:128px;">200/1000</div>
<div class="t" style="left:911px;top:153px;">Start time:</div>
<div class="t" style="left:1041px;top:153px;">06-Nov-2024 17:53:46</div>
<div class="t" style="left:911px;top:178px;">Duration:</div>
<div class="t" style="left:1041px;top:178px;">00:27:21</div>
<div class="t" style="left:911px;top:203px;">Final result:</div>
<div class="t" style="left:1041px;top:202px;line-height:14.8px;">Training finished after all<br>agents reached stop<br>training criteria.</div>

<!-- Training Information panel -->
<div class="panel" style="left:911px;top:258px;width:280px;height:295px;">
  <div class="ptitle"></div>
</div>
<div class="t b" style="left:915.5px;top:261px;">Training Information</div>
<div class="abs" style="left:922px;top:289px;width:258px;height:95px;box-sizing:border-box;border:1px solid #7d7d7d;background:#fff;"></div>
<div class="abs" style="left:923px;top:290px;width:256px;height:26px;background:#f5f5f5;border-bottom:1px solid #7d7d7d;"></div>
<div class="abs" style="left:923px;top:317px;width:256px;height:24px;background:#268cdd;"></div>
<div class="abs" style="left:1051px;top:290px;width:1px;height:51px;background:#7d7d7d;"></div>
<div class="t b" style="left:926px;top:297px;font-size:12.6px;transform:scaleX(0.92);transform-origin:0 0;">Agent</div>
<div class="t b" style="left:1055px;top:297px;font-size:12.6px;transform:scaleX(0.92);transform-origin:0 0;">Status</div>
<div class="t" style="left:926px;top:319.5px;color:#fff;font-size:12px;-webkit-text-stroke:0.35px #fff;">rlDQNAgent</div>
<div class="t" style="left:1055px;top:319.5px;color:#fff;font-size:12px;-webkit-text-stroke:0.35px #fff;">Training finished</div>
<div class="t b" style="left:922px;top:395px;">Episode Information (rlDQNAgent):</div>
<div class="t" style="left:922px;top:420px;">Episode reward:</div>
<div class="t" style="left:1042px;top:420px;">-754.0455</div>
<div class="t" style="left:922px;top:445px;">Average reward:</div>
<div class="t" style="left:1042px;top:445px;">-817.5499</div>
<div class="t" style="left:922px;top:470px;">Episode Q0:</div>
<div class="t" style="left:1042px;top:470px;">-152.9207</div>
<div class="t" style="left:922px;top:495px;">Evaluation statistic:</div>
<div class="t" style="left:1042px;top:495px;">-754.0534</div>
<div class="abs" style="left:1070px;top:519px;width:110px;height:23px;box-sizing:border-box;border:1px solid #7a7a7a;border-radius:4px;background:#f7f7f7;"></div>
<div class="t" style="left:1070px;top:523px;width:110px;text-align:center;">More Details...</div>

<!-- Plot Options panel -->
<div class="panel" style="left:911px;top:563px;width:280px;height:118px;">
  <div class="ptitle"></div>
</div>
<div class="t b" style="left:915.5px;top:566px;">Plot Options</div>
<div class="cb" style="left:922px;top:595px;"></div>
<svg class="abs" style="left:922px;top:595px" width="13" height="13" viewBox="0 0 13 13"><path d="M2.6 6.6L5.2 9.6L10.6 2.8" fill="none" stroke="#1a1a1a" stroke-width="1.9"/></svg>
<div class="t" style="left:939px;top:595px;">Show EpisodeQ0</div>
<div class="cb" style="left:922px;top:622px;"></div>
<svg class="abs" style="left:922px;top:622px" width="13" height="13" viewBox="0 0 13 13"><path d="M2.6 6.6L5.2 9.6L10.6 2.8" fill="none" stroke="#1a1a1a" stroke-width="1.9"/></svg>
<div class="t" style="left:939px;top:622px;">Show evaluation statistic</div>
<div class="cb" style="left:922px;top:652px;"></div>
<div class="t" style="left:939px;top:651px;">Show last N episodes</div>
<div class="abs" style="left:1066px;top:648px;width:114px;height:22px;box-sizing:border-box;border:1px solid #d6d6d6;background:#f5f5f5;"></div>
<div class="t" style="left:1066px;top:652px;width:109.5px;text-align:right;color:#a0a0a0;">1000</div>

<!-- Legend panel -->
<div class="panel" style="left:911px;top:691px;width:280px;height:102px;"></div>
<div class="abs" style="left:917px;top:697px;width:268px;height:90px;background:#fff;"></div>
<svg class="abs gs" style="left:917px;top:697px" width="268" height="90" viewBox="917 697 268 90" font-family="Liberation Sans, sans-serif" font-size="10.8" fill="#1a1a1a">
  <path d="M973 704.5H1013" stroke="#29B6EC" stroke-width="1"/><circle cx="993.3" cy="704.5" r="1.5" fill="#29B6EC"/>
  <path d="M973 723.5H1013" stroke="#0F6BC2" stroke-width="1"/><circle cx="993.3" cy="723.5" r="1.5" fill="#0F6BC2"/>
  <path d="M973 742.5H1013" stroke="#ECAA14" stroke-width="1"/><circle cx="993.3" cy="742.5" r="1.5" fill="#ECAA14"/>
  <path d="M989 770.8H997.6M993.3 766.5V775.1M990.3 767.8L996.3 773.8M996.3 767.8L990.3 773.8" stroke="#CC0A8C" stroke-width="1" fill="none"/>
  <text x="1017.5" y="708">Episode reward</text>
  <text x="1017.5" y="727">Average reward</text>
  <text x="1017.5" y="746">Episode Q0</text>
  <text x="1017.5" y="769">Evaluation statistic</text>
  <text x="1017.5" y="781">(MeanEpisodeReward)</text>
</svg>

<!-- status bar -->
<div class="abs" id="status"></div>
<div class="abs" style="left:0;top:833px;width:900px;height:1px;background:#848484;"></div>
<div class="abs" style="left:900px;top:834px;width:1px;height:22px;background:#bdbdbd;"></div>
<svg class="abs" style="left:1185px;top:838px" width="11" height="14" viewBox="0 0 11 14"><path d="M1 1L8.2 6.8L1 12.6Z" fill="#999"/><path d="M9.1 1V12.6" stroke="#999" stroke-width="1.9"/></svg>

<!-- window borders -->
<div class="abs" style="left:0;top:0;width:1202px;height:1px;background:linear-gradient(90deg,#8698ad,#a2a8ae 50%,#adadad);"></div>
<div class="abs" style="left:0;top:0;width:1px;height:857px;background:#8a9bb0;"></div>
<div class="abs" style="left:1201px;top:0;width:1px;height:857px;background:#9a9a9a;"></div>
<div class="abs" style="left:0;top:856px;width:1202px;height:1px;background:#7f8b98;"></div>
<div class="abs" style="left:144px;top:856px;width:33px;height:1px;background:#3a8199;"></div>
<div class="abs" style="left:177px;top:856px;width:85px;height:1px;background:#1f5fa6;"></div>
</div></body></html>
